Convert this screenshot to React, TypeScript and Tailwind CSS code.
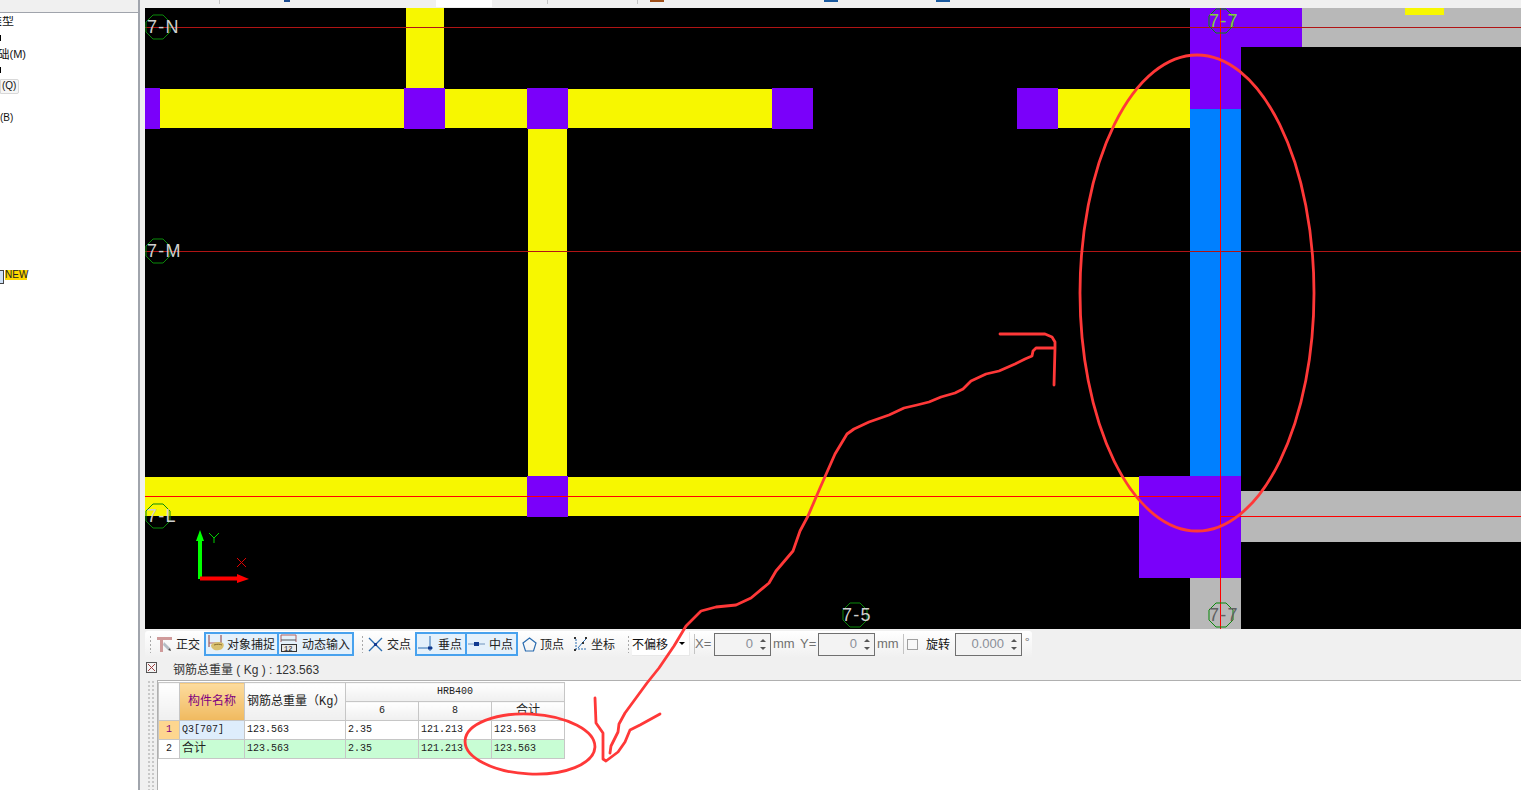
import React from "react";

const FONT_UI = "font-['Noto_Sans_CJK_SC','Liberation_Sans',sans-serif]";
const FONT_CELL = "font-['Liberation_Mono','Noto_Sans_CJK_SC',monospace]";
const FONT_LATIN = "font-['Liberation_Sans',sans-serif]";

function Grip() {
  return (
    <div className="w-[3px] h-[18px] shrink-0 bg-[radial-gradient(circle,#a8a8a8_1px,transparent_1px)] bg-[length:3px_4px]" />
  );
}

function Separator() {
  return <div className="w-px h-[20px] bg-[#c4c4c4] shrink-0" />;
}

function OrthoIcon() {
  return (
    <svg width="16" height="16" viewBox="0 0 16 16" className="shrink-0">
      <path d="M0 1h15v3H6v12H3V4H0z" fill="#cf9a9a" />
      <path d="M7 6l6 6-2 2-5-5z" fill="#b4bcc4" />
      <path d="M11 14l2-2 1 3z" fill="#444" />
    </svg>
  );
}

function SnapIcon() {
  return (
    <svg width="18" height="20" viewBox="0 0 18 20" className="shrink-0">
      <path d="M1 1v12M13 1v12" stroke="#8a3a3a" strokeWidth="1" />
      <path d="M1 9h12" stroke="#b06060" strokeWidth="1" />
      <path d="M3 11c2-3 8-4 12-2 2 2 0 7-4 7-4 1-8-1-8-5z" fill="#d8c070" />
      <path d="M6 11c3-1 6-1 8 0" stroke="#8a7030" strokeWidth="1" fill="none" />
    </svg>
  );
}

function DynamicIcon() {
  return (
    <svg width="18" height="20" viewBox="0 0 18 20" className="shrink-0">
      <path d="M1 1h15M1 1v7M16 1v7" stroke="#b06060" strokeWidth="1" fill="none" />
      <path d="M1 6h15" stroke="#555" strokeWidth="1" />
      <rect x="1.5" y="10.5" width="15" height="7" fill="#e8e8e8" stroke="#333" />
      <text x="4" y="17" fontSize="7" fontFamily="Liberation Mono" fill="#111">12</text>
    </svg>
  );
}

function CrossIcon() {
  return (
    <svg width="15" height="15" viewBox="0 0 15 15" className="shrink-0">
      <path d="M1 1l13 13M14 1L1 14" stroke="#2a6cb0" strokeWidth="1.4" />
      <rect x="6" y="6" width="3" height="3" fill="#123a90" />
    </svg>
  );
}

function PerpIcon() {
  return (
    <svg width="16" height="18" viewBox="0 0 16 18" className="shrink-0">
      <path d="M0 13h15M12 1v15" stroke="#2a6cb0" strokeWidth="1" />
      <rect x="10" y="11.5" width="4" height="3" fill="#123a90" />
    </svg>
  );
}

function MidIcon() {
  return (
    <svg width="17" height="8" viewBox="0 0 17 8" className="shrink-0">
      <path d="M0 4h17" stroke="#6f94bd" strokeWidth="1" />
      <rect x="6" y="2" width="5" height="4" fill="#123a90" />
    </svg>
  );
}

function VertexIcon() {
  return (
    <svg width="15" height="15" viewBox="0 0 15 15" className="shrink-0">
      <path d="M7.5 1L14 6l-2.5 8h-8L1 6z" fill="none" stroke="#2a6cb0" strokeWidth="1.2" />
    </svg>
  );
}

function CoordIcon() {
  return (
    <svg width="16" height="16" viewBox="0 0 16 16" className="shrink-0">
      <path d="M3 3v10h11" stroke="#2a6cb0" strokeWidth="1" fill="none" strokeDasharray="2 1" />
      <path d="M5 12l5-6 3-3" stroke="#2a6cb0" strokeWidth="1" fill="none" />
      <rect x="1" y="1" width="2" height="2" fill="#333" />
      <rect x="12" y="1" width="2" height="2" fill="#333" />
      <rect x="1" y="13" width="2" height="2" fill="#333" />
      <rect x="9" y="6" width="2" height="2" fill="#333" />
    </svg>
  );
}

function Spinner({ value, width }: { value: string; width: string }) {
  return (
    <div className={`${width} h-[23px] border border-[#707070] bg-[#f3f3f3] flex items-center shrink-0`}>
      <span className={`flex-1 text-right pr-[3px] text-[13px] text-[#8a8f98] ${FONT_LATIN}`}>{value}</span>
      <div className="w-[14px] flex flex-col items-center gap-[5px]">
        <div className="w-0 h-0 border-x-[3px] border-x-transparent border-b-[3px] border-b-[#555]" />
        <div className="w-0 h-0 border-x-[3px] border-x-transparent border-t-[3px] border-t-[#555]" />
      </div>
    </div>
  );
}

function Toolbar() {
  return (
    <div className={`h-[29px] flex items-center text-[12px] text-[#222] ${FONT_UI}`}>
      <div className="w-[887px] h-[27px] mt-px flex items-center rounded-[3px] bg-gradient-to-b from-white to-[#f0f0f0]">
        <div className="ml-[4px]"><Grip /></div>
        <div className="ml-[5px] w-[47px] flex items-center gap-[3px]">
          <OrthoIcon />
          <span className="whitespace-nowrap">正交</span>
        </div>
        <div className="w-[75px] h-[24px] border-2 border-[#48a2ee] bg-[#e5f1fb] flex items-center pl-[2px] gap-[1px] whitespace-nowrap">
          <SnapIcon />
          <span>对象捕捉</span>
        </div>
        <div className="w-[75px] h-[24px] border-2 border-l-0 border-[#48a2ee] bg-[#e5f1fb] flex items-center pl-[1px] gap-[4px] whitespace-nowrap">
          <DynamicIcon />
          <span>动态输入</span>
        </div>
        <div className="ml-[7px]"><Grip /></div>
        <div className="ml-[4px] w-[47px] flex items-center gap-[4px] whitespace-nowrap">
          <CrossIcon />
          <span>交点</span>
        </div>
        <div className="w-[52px] h-[24px] border-2 border-[#48a2ee] bg-[#e5f1fb] flex items-center pl-[1px] gap-[4px] whitespace-nowrap">
          <PerpIcon />
          <span>垂点</span>
        </div>
        <div className="w-[51px] h-[24px] border-2 border-l-0 border-[#48a2ee] bg-[#e5f1fb] flex items-center pl-[1px] gap-[4px] whitespace-nowrap">
          <MidIcon />
          <span>中点</span>
        </div>
        <div className="ml-[4px] w-[51px] flex items-center gap-[3px] whitespace-nowrap">
          <VertexIcon />
          <span>顶点</span>
        </div>
        <div className="w-[48px] flex items-center gap-[2px] whitespace-nowrap">
          <CoordIcon />
          <span>坐标</span>
        </div>
        <div className="ml-[6px]"><Grip /></div>
        <div className="ml-[2px] w-[58px] h-[24px] bg-white border-r border-b border-[#e8e8e8] flex items-center justify-between pr-[4px] whitespace-nowrap">
          <span className="text-[#111]">不偏移</span>
          <div className="w-0 h-0 border-x-[3px] border-x-transparent border-t-[3px] border-t-black" />
        </div>
        <div className="ml-[4px]"><Separator /></div>
        <span className={`w-[19px] text-[13px] text-[#707070] ${FONT_LATIN}`}>X=</span>
        <Spinner value="0" width="w-[57px]" />
        <span className={`ml-[2px] w-[27px] text-[13px] text-[#707070] ${FONT_LATIN}`}>mm</span>
        <span className={`w-[18px] text-[13px] text-[#707070] ${FONT_LATIN}`}>Y=</span>
        <Spinner value="0" width="w-[57px]" />
        <span className={`ml-[2px] w-[26px] text-[13px] text-[#707070] ${FONT_LATIN}`}>mm</span>
        <Separator />
        <div className="ml-[3px] w-[11px] h-[11px] border border-[#a0a0a0] bg-[#f8f8f8] shrink-0" />
        <span className="ml-[8px] w-[29px] text-[#111] whitespace-nowrap">旋转</span>
        <Spinner value="0.000" width="w-[67px]" />
        <span className="ml-[3px] text-[#707070] -mt-[5px]">°</span>
      </div>
    </div>
  );
}

const headCell = "border border-[#c6c6c6] bg-gradient-to-b from-white to-[#efefef] font-normal text-[#222] p-0";
const bodyCell = "border border-[#c6c6c6] pl-[2px] text-left text-[#222] whitespace-nowrap";

function SummaryTable() {
  return (
    <table className={`table-fixed border-collapse w-[407px] mt-px text-[10px] leading-none ${FONT_CELL}`}>
      <colgroup>
        <col className="w-[21px]" />
        <col className="w-[65px]" />
        <col className="w-[101px]" />
        <col className="w-[73px]" />
        <col className="w-[73px]" />
        <col className="w-[73px]" />
      </colgroup>
      <thead>
        <tr className="h-[19px]">
          <th rowSpan={2} className={headCell} />
          <th rowSpan={2} className="border border-[#c6c6c6] bg-gradient-to-b from-[#fcdc9e] to-[#f0b95e] font-normal text-[12px] text-[#800080] p-0">
            构件名称
          </th>
          <th rowSpan={2} className={`${headCell} text-[12px] text-left pl-[2px] whitespace-nowrap`}>
            钢筋总重量（Kg）
          </th>
          <th colSpan={3} className={headCell}>HRB400</th>
        </tr>
        <tr className="h-[19px]">
          <th className={headCell}>6</th>
          <th className={headCell}>8</th>
          <th className={`${headCell} text-[12px]`}>合计</th>
        </tr>
      </thead>
      <tbody>
        <tr className="h-[19px]">
          <td className="border border-[#c6c6c6] bg-[#fdd68f] text-center text-[#800080]">1</td>
          <td className={`${bodyCell} bg-[#deedfc]`}>Q3[707]</td>
          <td className={bodyCell}>123.563</td>
          <td className={bodyCell}>2.35</td>
          <td className={bodyCell}>121.213</td>
          <td className={bodyCell}>123.563</td>
        </tr>
        <tr className="h-[19px]">
          <td className="border border-[#c6c6c6] bg-white text-center text-[#222]">2</td>
          <td className={`${bodyCell} bg-[#c8fdd4] text-[12px]`}>合计</td>
          <td className={`${bodyCell} bg-[#c8fdd4]`}>123.563</td>
          <td className={`${bodyCell} bg-[#c8fdd4]`}>2.35</td>
          <td className={`${bodyCell} bg-[#c8fdd4]`}>121.213</td>
          <td className={`${bodyCell} bg-[#c8fdd4]`}>123.563</td>
        </tr>
      </tbody>
    </table>
  );
}

function AxisBubble({
  x,
  y,
  label,
  tx,
  r = 13,
  fill = "#cfcfcf",
}: {
  x: number;
  y: number;
  label: string;
  tx: number;
  r?: number;
  fill?: string;
}) {
  const pts = Array.from({ length: 8 }, (_, i) => {
    const a = (Math.PI * 2 * i) / 8 + Math.PI / 8;
    return `${x + r * Math.cos(a)},${y + r * Math.sin(a)}`;
  }).join(" ");
  return (
    <g>
      <polygon points={pts} fill="none" stroke="#0a8a0a" strokeWidth="1" />
      <text x={tx} y={y + 6} fontSize="18" letterSpacing="1.2" fontFamily="Liberation Sans" fill={fill}>
        {label}
      </text>
    </g>
  );
}

function Drawing() {
  const yellow = "#f7f700";
  const purple = "#7a00fa";
  const gray = "#b8b8b8";
  const blue = "#0080ff";
  return (
    <svg width="1376" height="621" viewBox="145 8 1376 621" className="block bg-black">
      <rect x="406" y="8" width="38" height="80" fill={yellow} />
      <rect x="160" y="89" width="612" height="39" fill={yellow} />
      <rect x="528" y="129" width="39" height="347" fill={yellow} />
      <rect x="1058" y="89" width="132" height="39" fill={yellow} />
      <rect x="145" y="477" width="994" height="39" fill={yellow} />

      <rect x="145" y="88" width="15" height="41" fill={purple} />
      <rect x="404" y="88" width="41" height="41" fill={purple} />
      <rect x="527" y="88" width="41" height="41" fill={purple} />
      <rect x="772" y="88" width="41" height="41" fill={purple} />
      <rect x="1017" y="88" width="41" height="41" fill={purple} />
      <rect x="527" y="476" width="41" height="41" fill={purple} />

      <rect x="1302" y="8" width="219" height="39" fill={gray} />
      <rect x="1405" y="8" width="39" height="7" fill={yellow} />
      <rect x="1241" y="491" width="280" height="51" fill={gray} />
      <rect x="1190" y="578" width="51" height="51" fill={gray} />

      <rect x="1190" y="8" width="112" height="39" fill={purple} />
      <rect x="1190" y="47" width="51" height="62" fill={purple} />
      <rect x="1190" y="109" width="51" height="367" fill={blue} />
      <rect x="1139" y="476" width="102" height="102" fill={purple} />

      <path d="M145 27.5h1376M145 251.5h1376" stroke="#b01414" strokeWidth="1" />
      <path d="M1220.5 8v621" stroke="#ff0000" strokeWidth="1" />
      <path d="M145 496.5h1075.5M1220.5 516.5H1521" stroke="#ff0000" strokeWidth="1" />

      <AxisBubble x={158} y={27} tx={147} label="7-N" />
      <AxisBubble x={158} y={251} tx={147} label="7-M" />
      <AxisBubble x={158} y={516} tx={147} label="7-L" />
      <AxisBubble x={1221} y={21} tx={1209} label="7-7" fill="#86d040" />
      <AxisBubble x={855} y={615} tx={842} label="7-5" />
      <AxisBubble x={1221} y={615} tx={1209} label="7-7" fill="#606060" />

      <path d="M200 579v-40" stroke="#00ff00" strokeWidth="4" />
      <path d="M200 530l-4 11h8z" fill="#00ff00" />
      <path d="M209 533l5 5 5-5M214 538v5" stroke="#00d000" strokeWidth="1" fill="none" />
      <path d="M200 578.5h40" stroke="#ff0000" strokeWidth="4" />
      <path d="M249 579l-12-5v9z" fill="#ff0000" />
      <path d="M237 558l9 9M246 558l-9 9" stroke="#e00000" strokeWidth="1" />
    </svg>
  );
}

function Annotations() {
  return (
    <svg width="1521" height="790" viewBox="0 0 1521 790" className="absolute inset-0 pointer-events-none">
      <g fill="none" stroke="#ff3838" strokeWidth="2.8" strokeLinecap="round" strokeLinejoin="round">
        <ellipse cx="1197" cy="293" rx="117" ry="238" />
        <ellipse cx="530" cy="744" rx="65" ry="30" transform="rotate(3 530 744)" />
        <path d="M1000 334h45l7 3 3 5v6l-1 37" />
        <path d="M1054 348h-18l-3 3-1 5-7 3-10 5-16 7-13 3-15 7-8 8-8 4-14 4-12 5-12 3-13 3-15 7-20 7-15 7-7 5-12 20-15 34-12 28-8 15-7 20-17 20-7 12-18 15-15 7-20 2-15 4-15 15-12 20-15 22-12 15-22 30-6 11-1 8-7 14-1 7" />
        <path d="M595 698l1 25 7 10v26l3 2 12-9 7-10 5-12 10-5 20-11" />
      </g>
    </svg>
  );
}

function LeftPanel() {
  return (
    <div className={`w-[140px] shrink-0 flex flex-col border-r-2 border-[#a0a4ac] bg-white text-[12px] leading-none text-[#111] ${FONT_CELL}`}>
      <div className="h-[13px] shrink-0 bg-[#f0f0f0] border-b border-[#a0a4ac]" />
      <div className="h-[16px] mt-px flex items-center">
        <div className="w-[14px] flex justify-end overflow-hidden whitespace-nowrap">类型</div>
      </div>
      <div className="h-[16px] flex items-center"><div className="w-px h-[6px] bg-black" /></div>
      <div className="h-[16px] flex items-center">
        <div className={`w-[26px] flex justify-end items-center overflow-hidden whitespace-nowrap text-[11px] ${FONT_LATIN}`}>
          <span className={`text-[12px] ${FONT_UI}`}>基础</span>(M)
        </div>
      </div>
      <div className="h-[16px] flex items-center"><div className="w-px h-[6px] bg-black" /></div>
      <div className="h-[16px] flex items-center">
        <div className={`w-[19px] h-[15px] border border-[#d8d8d8] rounded-r-[2px] bg-[#f6f6f6] flex items-center pl-px text-[10px] ${FONT_LATIN}`}>(Q)</div>
      </div>
      <div className="h-[16px]" />
      <div className="h-[16px] flex items-center">
        <div className={`w-[15px] text-[10px] whitespace-nowrap ${FONT_LATIN}`}>(B)</div>
      </div>
      <div className="h-[144px]" />
      <div className="h-[15px] flex items-start">
        <div className="w-[4px] h-[14px] border-y border-r border-[#444] bg-[#cfe2f8]" />
        <span className={`ml-px h-[10px] w-[22px] bg-[#ffd800] text-[10px] leading-[10px] text-[#222] text-center ${FONT_LATIN}`}>NEW</span>
      </div>
    </div>
  );
}

export default function App() {
  return (
    <div className="relative w-[1521px] h-[790px] overflow-hidden flex bg-[#f0f0f0]">
      <LeftPanel />
      <div className="w-[5px] shrink-0 bg-[#f0f0f0]" />
      <div className="flex-1 flex flex-col min-w-0">
        <div className="h-[8px] shrink-0 flex items-start">
          <div className="ml-[74px] w-px h-[4px] bg-[#c4c4c4]" />
          <div className="ml-[64px] w-[6px] h-[2px] bg-[#1a4a90]" />
          <div className="ml-[146px] w-[56px] h-[7px] bg-white" />
          <div className="ml-[55px] w-px h-[4px] bg-[#c4c4c4]" />
          <div className="ml-[89px] w-px h-[4px] bg-[#c4c4c4]" />
          <div className="ml-[12px] w-[14px] h-[2px] bg-[#a0501a]" />
          <div className="ml-[160px] w-[14px] h-[2px] bg-[#1a5aa0]" />
          <div className="ml-[98px] w-[14px] h-[2px] bg-[#1a5aa0]" />
        </div>
        <Drawing />
        <Toolbar />
        <div className="h-[22px] shrink-0 flex items-center pt-[2px] text-[12px] text-[#333] font-['Liberation_Sans','Noto_Sans_CJK_SC',sans-serif]">
          <svg width="12" height="12" viewBox="0 0 12 12" className="ml-px mb-[4px] shrink-0">
            <rect x="0.5" y="0.5" width="10" height="10" fill="#f4f4f4" stroke="#555" />
            <path d="M2 2l7 7M9 2L2 9" stroke="#a04040" strokeWidth="1" />
          </svg>
          <span className="ml-[15px] whitespace-nowrap">钢筋总重量 ( Kg ) : 123.563</span>
        </div>
        <div className="flex-1 flex min-h-0">
          <div className="w-[12px] shrink-0 bg-[#f0f0f0] flex pl-[2px]">
            <div className="w-[8px] h-full bg-[radial-gradient(circle,#c8c8c8_1px,transparent_1px)] bg-[length:4px_4px]" />
          </div>
          <div className="flex-1 bg-white border-t border-l border-[#b0b0b0]">
            <SummaryTable />
          </div>
        </div>
      </div>
      <Annotations />
    </div>
  );
}
